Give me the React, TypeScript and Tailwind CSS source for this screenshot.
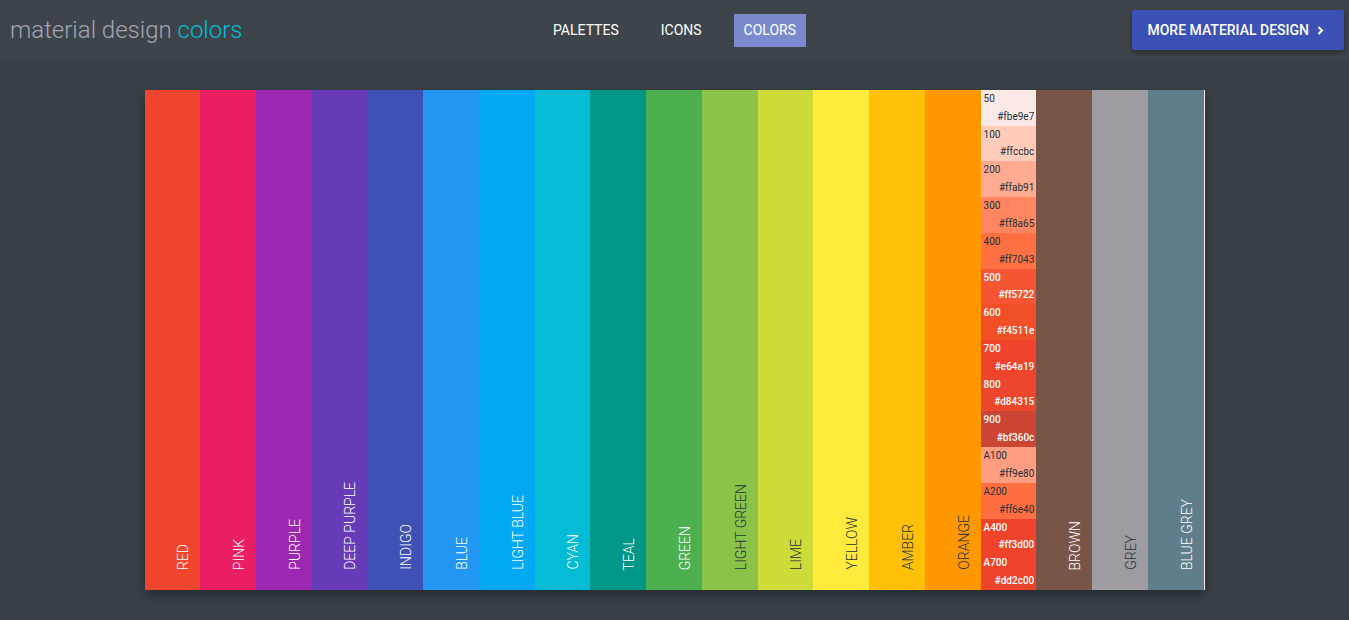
type Swatch = { name: string; bg: string; dark?: boolean };
type Shade = { name: string; hex: string; bg: string; dark?: boolean };

const before: Swatch[] = [
  { name: "Red", bg: "bg-[#f1462d]" },
  { name: "Pink", bg: "bg-[#e91e63]" },
  { name: "Purple", bg: "bg-[#9c27b0]" },
  { name: "Deep Purple", bg: "bg-[#673ab7]" },
  { name: "Indigo", bg: "bg-[#3f51b5]" },
  { name: "Blue", bg: "bg-[#2196f3]" },
  { name: "Light Blue", bg: "bg-[#03a9f4]" },
  { name: "Cyan", bg: "bg-[#04bcd6]" },
  { name: "Teal", bg: "bg-[#009688]" },
  { name: "Green", bg: "bg-[#4caf50]" },
  { name: "Light Green", bg: "bg-[#8bc34a]", dark: true },
  { name: "Lime", bg: "bg-[#cddc39]", dark: true },
  { name: "Yellow", bg: "bg-[#ffeb3b]", dark: true },
  { name: "Amber", bg: "bg-[#ffc107]", dark: true },
  { name: "Orange", bg: "bg-[#ff9800]", dark: true },
];

const after: Swatch[] = [
  { name: "Brown", bg: "bg-[#795548]" },
  { name: "Grey", bg: "bg-[#9e9ca2]", dark: true },
  { name: "Blue Grey", bg: "bg-[#607d8b]" },
];

const shades: Shade[] = [
  { name: "50", hex: "#fbe9e7", bg: "bg-[#fbe9e7]", dark: true },
  { name: "100", hex: "#ffccbc", bg: "bg-[#ffccbc]", dark: true },
  { name: "200", hex: "#ffab91", bg: "bg-[#ffab91]", dark: true },
  { name: "300", hex: "#ff8a65", bg: "bg-[#ff8660]", dark: true },
  { name: "400", hex: "#ff7043", bg: "bg-[#ff7043]", dark: true },
  { name: "500", hex: "#ff5722", bg: "bg-[#f65534]" },
  { name: "600", hex: "#f4511e", bg: "bg-[#f14f28]" },
  { name: "700", hex: "#e64a19", bg: "bg-[#f0432c]" },
  { name: "800", hex: "#d84315", bg: "bg-[#ec472c]" },
  { name: "900", hex: "#bf360c", bg: "bg-[#cc4432]" },
  { name: "A100", hex: "#ff9e80", bg: "bg-[#ff9e80]", dark: true },
  { name: "A200", hex: "#ff6e40", bg: "bg-[#ff6e40]", dark: true },
  { name: "A400", hex: "#ff3d00", bg: "bg-[#f0432c]" },
  { name: "A700", hex: "#dd2c00", bg: "bg-[#f0432c]" },
];

function Column({ name, bg, dark }: Swatch) {
  return (
    <button
      type="button"
      className={`flex items-end justify-end pr-[9px] pb-5 ${bg} ${dark ? "text-[#263238]" : "text-white"}`}
    >
      <span className="rotate-180 text-sm leading-4 font-light whitespace-nowrap uppercase [writing-mode:vertical-rl]">
        {name}
      </span>
    </button>
  );
}

function ShadeColumn() {
  return (
    <div className="flex flex-col">
      {shades.map((s) => (
        <button
          type="button"
          key={s.name}
          className={`flex min-h-0 flex-1 flex-col items-start justify-between py-[3px] pr-[2px] pl-[3px] text-[10px] leading-3 ${s.bg} ${s.dark ? "text-[#263238]" : "text-white font-medium"}`}
        >
          <span>{s.name}</span>
          <span className="self-end">{s.hex}</span>
        </button>
      ))}
    </div>
  );
}

export default function App() {
  return (
    <div className="min-h-screen bg-[#394147] font-['Roboto',sans-serif] text-[#fbe9e7]">
      <header className="grid h-[60px] grid-cols-[1fr_auto_1fr] items-center bg-[#3d454b] px-[5px]">
        <a href="#home" className="pl-[5px] text-2xl font-light text-[#a5a3b4]">
          material design <span className="text-[#04bcd6]">colors</span>
        </a>
        <nav className="flex gap-[22px] text-sm leading-[21px] text-white">
          <a href="#palettes" className="px-[10px] py-[6px]">PALETTES</a>
          <a href="#icons" className="px-[10px] py-[6px]">ICONS</a>
          <a href="#colors" className="bg-[#7b89cf] px-[10px] py-[6px]">COLORS</a>
        </nav>
        <a
          href="#more"
          className="flex h-10 items-center gap-2 justify-self-end rounded-xs bg-[#3b51b5] pr-5 pl-[15px] text-sm font-medium text-white shadow-[0_3px_6px_rgba(0,0,0,0.35)]"
        >
          MORE MATERIAL DESIGN
          <svg className="h-[9px] w-[7px]" viewBox="0 0 7 9" fill="none" stroke="currentColor" strokeWidth="2" aria-hidden="true">
            <path d="M1.5 1 5 4.5 1.5 8" />
          </svg>
        </a>
      </header>
      <main className="px-5 pt-[30px] pb-[30px]">
        <div className="mx-auto grid h-[500px] w-full max-w-[1060px] grid-cols-[repeat(19,minmax(0,1fr))] bg-[#fbe9e7] pr-px shadow-[0_5px_12px_rgba(0,0,0,0.35)]">
          {before.map((c) => (
            <Column key={c.name} {...c} />
          ))}
          <ShadeColumn />
          {after.map((c) => (
            <Column key={c.name} {...c} />
          ))}
        </div>
      </main>
    </div>
  );
}
